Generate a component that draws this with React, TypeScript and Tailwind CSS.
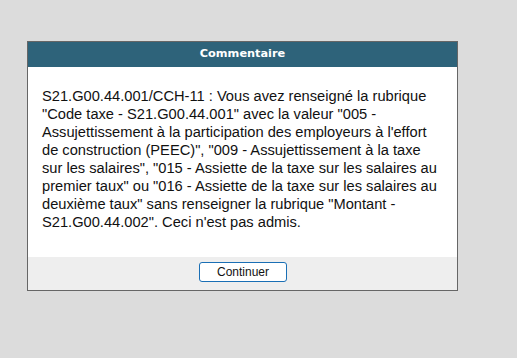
const MESSAGE =
  'S21.G00.44.001/CCH-11 : Vous avez renseigné la rubrique "Code taxe - S21.G00.44.001" avec la valeur "005 - Assujettissement à la participation des employeurs à l\'effort de\u00A0construction (PEEC)", "009 - Assujettissement à la taxe sur les salaires", "015 - Assiette de la taxe sur les salaires au premier taux" ou "016 - Assiette de la taxe sur les salaires au deuxième taux" sans renseigner la rubrique "Montant - S21.G00.44.002". Ceci n\'est pas admis.';

export default function App() {
  return (
    <div className="w-[517px] h-[358px] bg-[#dcdcdc] pt-[41px] pl-[27px]">
      <div className="w-[431px] border border-[#666666] bg-white flex flex-col">
        <div className="h-[25px] bg-[#2e637a] flex items-center justify-center text-white font-bold text-[11.3px]" style={{ fontFamily: '"DejaVu Sans", Verdana, sans-serif' }}>
          Commentaire
        </div>
        <div className="pt-[20px] pb-[26px] pl-[14px] pr-[18px] text-[14.67px] leading-[18px] text-[#111111]" style={{ fontFamily: '"Liberation Sans", Arial, sans-serif' }}>
          {MESSAGE}
        </div>
        <div className="h-[33px] bg-[#eeeeee] flex items-start justify-center pt-[5px]">
          <button className="w-[88px] h-[20px] bg-white border border-[#1a6fb5] rounded-[3px] text-[12px] text-[#111111] flex items-center justify-center ml-[1px]" style={{ fontFamily: '"Liberation Sans", Arial, sans-serif' }}>
            Continuer
          </button>
        </div>
      </div>
    </div>
  );
}
